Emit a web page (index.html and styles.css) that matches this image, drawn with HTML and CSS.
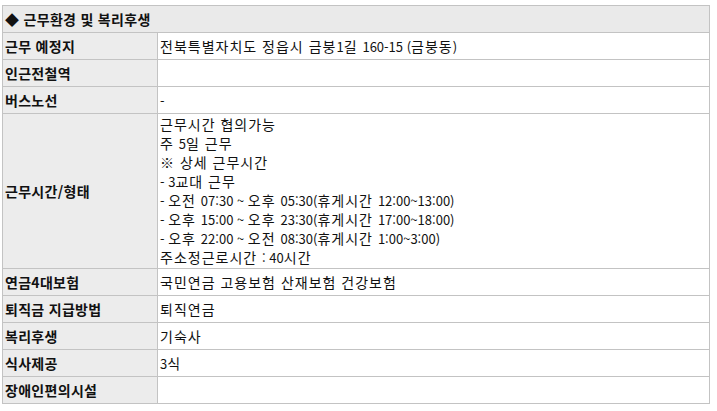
FILE: index.html
```html
<!DOCTYPE html>
<html lang="ko">
<head>
<meta charset="utf-8">
<link rel="stylesheet" href="styles.css">
</head>
<body>
<table class="info">
  <colgroup><col class="col-label"><col class="col-value"></colgroup>
  <tr class="row">
    <th class="title" colspan="2">◆ 근무환경 및 복리후생</th>
  </tr>
  <tr class="row"><th class="label">근무 예정지</th><td class="value">전북특별자치도 정읍시 금붕<span class="n">1</span>길 <span class="n">160-15 (</span>금붕동<span class="n">)</span></td></tr>
  <tr class="row"><th class="label">인근전철역</th><td class="value"></td></tr>
  <tr class="row"><th class="label">버스노선</th><td class="value"><span class="n">-</span></td></tr>
  <tr><th class="label">근무시간/형태</th><td class="value multi">근무시간 협의가능<br>주 <span class="n">5</span>일 근무<br>※ 상세 근무시간<br><span class="n">- 3</span>교대 근무<br><span class="n">- </span>오전 <span class="n">07:30 ~ </span>오후 <span class="n">05:30(</span>휴게시간 <span class="n">12:00~13:00)</span><br><span class="n">- </span>오후 <span class="n">15:00 ~ </span>오후 <span class="n">23:30(</span>휴게시간 <span class="n">17:00~18:00)</span><br><span class="n">- </span>오후 <span class="n">22:00 ~ </span>오전 <span class="n">08:30(</span>휴게시간 <span class="n">1:00~3:00)</span><br>주소정근로시간 <span class="n">: 40</span>시간</td></tr>
  <tr class="row"><th class="label">연금4대보험</th><td class="value">국민연금 고용보험 산재보험 건강보험</td></tr>
  <tr class="row"><th class="label">퇴직금 지급방법</th><td class="value">퇴직연금</td></tr>
  <tr class="row"><th class="label">복리후생</th><td class="value">기숙사</td></tr>
  <tr class="row"><th class="label">식사제공</th><td class="value"><span class="n">3</span>식</td></tr>
  <tr class="row"><th class="label">장애인편의시설</th><td class="value"></td></tr>
</table>
</body>
</html>
```
FILE: styles.css
```css
html, body {
  margin: 0;
  padding: 0;
  background: #ffffff;
}
body {
  padding: 5px 0 0 2px;
  font-family: "Noto Sans CJK KR", "Noto Sans", sans-serif;
  font-size: 13px;
  line-height: 19px;
  color: #111;
}
.info {
  border-collapse: collapse;
  width: 708px;
  table-layout: fixed;
}
.col-label {
  width: 155px;
}
.info th, .info td {
  border: 1px solid #c3c3c3;
  padding: 1px 2px;
  text-align: left;
  vertical-align: middle;
}
.row {
  height: 27px;
}
.title {
  background: #eaeaea;
  font-size: 14px;
  font-weight: bold;
  letter-spacing: 0.3px;
}
.label {
  background: #ececec;
  font-size: 14px;
  font-weight: bold;
  letter-spacing: 0.3px;
}
.value {
  background: #ffffff;
  font-size: 14px;
  font-weight: normal;
  letter-spacing: 1px;
}
.n {
  font-size: 13px;
  letter-spacing: 0;
}
.multi {
  padding-top: 1px;
  padding-bottom: 1px;
}
```
